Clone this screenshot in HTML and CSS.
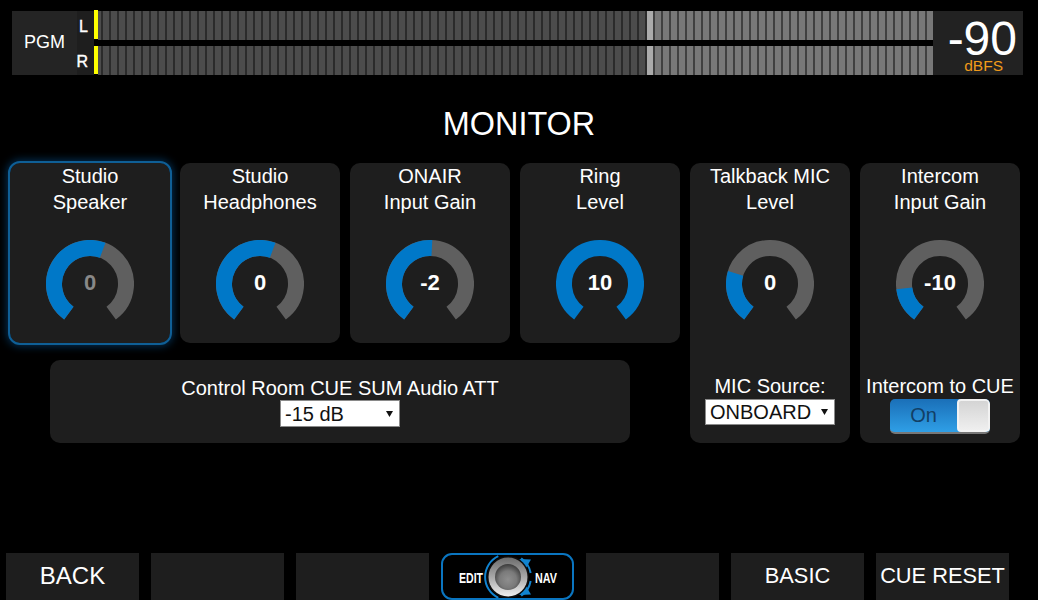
FILE: index.html
```html
<!DOCTYPE html>
<html lang="en">
<head>
<meta charset="utf-8">
<title>Monitor</title>
<link rel="stylesheet" href="styles.css">
</head>
<body>
<header class="meter">
  <div class="meter-label">PGM</div>
  <div class="meter-channels"><span>L</span><span>R</span></div>
  <div class="meter-bars">
    <div class="bar"><i class="tick"></i><i class="seg-low"></i><i class="seg-peak"></i><i class="seg-high"></i></div>
    <div class="bar"><i class="tick"></i><i class="seg-low"></i><i class="seg-peak"></i><i class="seg-high"></i></div>
  </div>
  <div class="meter-read"><div class="read-num">-90</div><div class="read-unit">dBFS</div></div>
</header>

<h1 class="title">MONITOR</h1>

<main class="board">
  <div class="left">
    <div class="short-row">
      <section class="card focused">
        <div class="label">Studio<br>Speaker</div>
        <div class="gauge">
          <svg viewBox="0 0 88 88" width="88" height="88"><path class="g-track" d="M22.84 73.12A36 36 0 1 1 65.16 73.12"/><path class="g-fill" d="M22.84 73.12A36 36 0 0 1 56.67 10.3"/></svg>
          <span class="g-val dim">0</span>
        </div>
      </section>
      <section class="card">
        <div class="label">Studio<br>Headphones</div>
        <div class="gauge">
          <svg viewBox="0 0 88 88" width="88" height="88"><path class="g-track" d="M22.84 73.12A36 36 0 1 1 65.16 73.12"/><path class="g-fill" d="M22.84 73.12A36 36 0 0 1 56.67 10.3"/></svg>
          <span class="g-val">0</span>
        </div>
      </section>
      <section class="card">
        <div class="label">ONAIR<br>Input Gain</div>
        <div class="gauge">
          <svg viewBox="0 0 88 88" width="88" height="88"><path class="g-track" d="M22.84 73.12A36 36 0 1 1 65.16 73.12"/><path class="g-fill" d="M22.84 73.12A36 36 0 0 1 45.88 8.05"/></svg>
          <span class="g-val">-2</span>
        </div>
      </section>
      <section class="card">
        <div class="label">Ring<br>Level</div>
        <div class="gauge">
          <svg viewBox="0 0 88 88" width="88" height="88"><path class="g-fill" d="M22.84 73.12A36 36 0 1 1 65.16 73.12"/></svg>
          <span class="g-val">10</span>
        </div>
      </section>
    </div>
    <section class="sum-panel">
      <div class="sum-label">Control Room CUE SUM Audio ATT</div>
      <select class="picker picker-att"><option>-15 dB</option></select>
    </section>
  </div>

  <section class="card tall">
    <div class="label">Talkback MIC<br>Level</div>
    <div class="gauge">
      <svg viewBox="0 0 88 88" width="88" height="88"><path class="g-track" d="M22.84 73.12A36 36 0 1 1 65.16 73.12"/><path class="g-fill" d="M22.84 73.12A36 36 0 0 1 9.62 33.3"/></svg>
      <span class="g-val">0</span>
    </div>
    <div class="sub-label">MIC Source:</div>
    <select class="picker picker-mic"><option>ONBOARD</option></select>
  </section>

  <section class="card tall">
    <div class="label">Intercom<br>Input Gain</div>
    <div class="gauge">
      <svg viewBox="0 0 88 88" width="88" height="88"><path class="g-track" d="M22.84 73.12A36 36 0 1 1 65.16 73.12"/><path class="g-fill" d="M22.84 73.12A36 36 0 0 1 8.27 48.39"/></svg>
      <span class="g-val">-10</span>
    </div>
    <div class="sub-label">Intercom to CUE</div>
    <div class="toggle"><span class="toggle-on">On</span><span class="toggle-knob"></span></div>
  </section>
</main>

<footer class="softkeys">
  <div class="key key-big">BACK</div>
  <div class="key"></div>
  <div class="key"></div>
  <div class="key-logo">
    <svg viewBox="0 0 133 47" width="133" height="47">
      <defs>
        <linearGradient id="ring" x1="0" y1="0" x2="0" y2="1"><stop offset="0" stop-color="#6c6c6c"/><stop offset="0.5" stop-color="#a8a8a8"/><stop offset="1" stop-color="#f0f0f0"/></linearGradient>
        <radialGradient id="cap" cx="0.5" cy="0.6" r="0.6"><stop offset="0" stop-color="#8e8e8e"/><stop offset="0.55" stop-color="#7a7a7a"/><stop offset="1" stop-color="#3a3a3a"/></radialGradient>
      </defs>
      <text class="logo-text" x="18" y="30" textLength="24" lengthAdjust="spacingAndGlyphs">EDIT</text>
      <text class="logo-text" x="94" y="30" textLength="22" lengthAdjust="spacingAndGlyphs">NAV</text>
      <path class="logo-arc" d="M57.3 3.2A23 23 0 0 0 57.3 44.8"/>
      <path class="logo-arc" d="M80.2 5.2A23 23 0 0 1 89.65 20"/>
      <path class="logo-arc" d="M89.65 28A23 23 0 0 1 80.2 42.8"/>
      <path class="logo-head" d="M78 6L90 6.5L85 15Z"/>
      <path class="logo-head" d="M78 42L90 41.5L85 33Z"/>
      <circle cx="67" cy="24" r="21" fill="#0c0c0c"/>
      <circle cx="67" cy="24" r="19.5" fill="url(#ring)"/>
      <circle cx="67" cy="24" r="13" fill="url(#cap)"/>
    </svg>
  </div>
  <div class="key"></div>
  <div class="key key-mid">BASIC</div>
  <div class="key key-mid">CUE RESET</div>
</footer>
</body>
</html>
```

FILE: styles.css
```css
* { box-sizing: border-box; }
html, body { margin: 0; height: 100%; }
body {
  width: 1038px;
  height: 600px;
  overflow: hidden;
  background: #000;
  color: #fff;
  font-family: "Liberation Sans", Arial, sans-serif;
}

/* top meter */
.meter {
  display: flex;
  width: 1011px;
  height: 64px;
  margin: 11px 0 0 12px;
}
.meter-label {
  width: 65px;
  background: #242424;
  font-size: 18px;
  line-height: 63px;
  text-align: center;
}
.meter-channels {
  width: 17px;
  background: #1e1e1e;
  display: flex;
  flex-direction: column;
  justify-content: space-between;
  align-items: flex-end;
  padding: 6px 6px 3px 0;
  font-size: 16px;
  line-height: 20px;
  -webkit-text-stroke: 0.4px #fff;
}
.meter-bars {
  width: 839px;
  display: flex;
  flex-direction: column;
  justify-content: space-between;
}
.bar { display: flex; height: 29px; }
.bar i { display: block; height: 100%; }
.tick { width: 4px; background: #ffff00; }
.bar:first-child .tick { margin-top: -1px; height: 29px; }
.bar:last-child .tick { height: 28px; }
.seg-low {
  width: 549px;
  background: repeating-linear-gradient(to right, #4c4c4c 0 3px, #2b2b2b 3px 5px, #4c4c4c 5px 8px);
}
.seg-peak { width: 6px; background: #ababab; }
.seg-high {
  width: 280px;
  background: repeating-linear-gradient(to right, #404040 0 2px, #787878 2px 8px);
}
.meter-read {
  width: 90px;
  background: #222;
  text-align: right;
  padding: 7px 6px 0 0;
}
.read-num {
  font-size: 48px;
  line-height: 42px;
}
.read-unit {
  color: #f09a1a;
  font-size: 15.5px;
  line-height: 12px;
  padding-right: 14px;
}

.title {
  margin: 29px 0 19px;
  font-size: 32.4px;
  font-weight: 400;
  line-height: 40px;
  text-align: center;
}

/* cards */
.board {
  display: flex;
  gap: 10px;
  padding-left: 10px;
  height: 280px;
}
.left { width: 670px; }
.short-row { display: flex; gap: 10px; }
.card {
  width: 160px;
  height: 180px;
  background: #1e1e1e;
  border-radius: 10px;
  display: flex;
  flex-direction: column;
  align-items: center;
}
.card.tall { height: 280px; }
.card.focused {
  outline: 2px solid #0f5f96;
  box-shadow: 0 0 9px 3px rgba(8, 100, 175, 0.5);
}
.label {
  font-size: 20px;
  line-height: 26px;
  text-align: center;
  height: 52px;
  white-space: nowrap;
}
.gauge {
  display: grid;
  width: 88px;
  height: 88px;
  margin-top: 25px;
  place-items: center;
}
.gauge > * { grid-area: 1 / 1; }
.gauge svg { display: block; }
.g-track, .g-fill { fill: none; stroke-width: 16; }
.g-track { stroke: #5f5f5f; }
.g-fill { stroke: #0078c8; }
.g-val { font-size: 22px; font-weight: 700; line-height: 24px; margin-top: -2px; }
.g-val.dim { color: #888; }

.sub-label {
  font-size: 20px;
  line-height: 26px;
  margin-top: 45px;
  white-space: nowrap;
}
.picker {
  display: block;
  appearance: none;
  -webkit-appearance: none;
  background: #fff url("data:image/svg+xml,%3Csvg xmlns='http://www.w3.org/2000/svg' width='7' height='6'%3E%3Cpath d='M0 0H7L3.5 6Z' fill='%23111'/%3E%3C/svg%3E") no-repeat right 6px center;
  color: #111;
  border: 1px solid #8a8a8a;
  border-radius: 0;
  font-family: "Liberation Sans", Arial, sans-serif;
  font-size: 20px;
  padding: 0 0 0 4px;
}
.picker-att { width: 120px; height: 27px; }
.picker-mic { width: 130px; height: 26px; }

.sum-panel {
  width: 580px;
  height: 83px;
  margin: 17px 0 0 40px;
  background: #1e1e1e;
  border-radius: 10px;
  display: flex;
  flex-direction: column;
  align-items: center;
  padding-top: 16px;
}
.sum-label { font-size: 20px; line-height: 24px; }

.toggle {
  display: flex;
  width: 100px;
  height: 35px;
  border-radius: 5px;
  overflow: hidden;
  background: linear-gradient(#1a6fb8, #2f9fe6);
  border-bottom: 2px solid #777;
}
.toggle-on {
  flex: 1;
  color: #123f66;
  font-size: 20px;
  line-height: 33px;
  text-align: center;
}
.toggle-knob {
  width: 33px;
  background: linear-gradient(#d4d4d4, #efefef);
  border: 2px solid #f2f2f2;
  border-radius: 4px;
}

/* soft keys */
.softkeys {
  display: flex;
  gap: 12px;
  margin-top: 110px;
  padding-left: 6px;
  height: 47px;
}
.key {
  width: 133px;
  height: 47px;
  background: #1e1e1e;
  text-align: center;
  line-height: 46px;
  white-space: nowrap;
}
.key-big { font-size: 24px; }
.key-mid { font-size: 21.8px; }
.key-logo { width: 133px; height: 47px; border: 2px solid #0a75c0; border-radius: 11px; }
.key-logo svg { display: block; margin: -2px; overflow: visible; }
.logo-text {
  fill: #fff;
  font-family: "Liberation Sans", Arial, sans-serif;
  font-size: 14px;
  font-weight: 700;
}
.logo-arc { fill: none; stroke: #1184d0; stroke-width: 2; }
.logo-head { fill: #1184d0; }
```
